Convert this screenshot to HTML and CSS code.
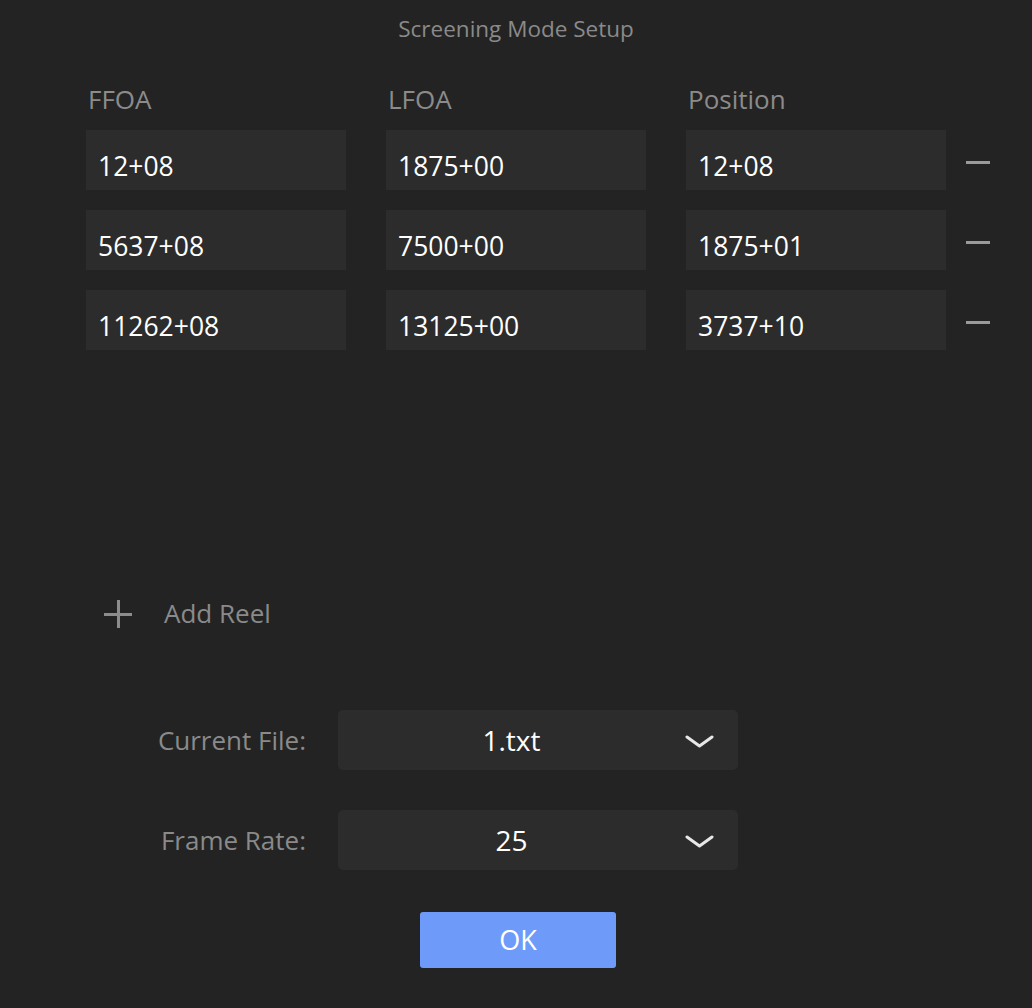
FILE: index.html
```html
<!DOCTYPE html>
<html lang="en">
<head>
<meta charset="utf-8">
<title>Screening Mode Setup</title>
<link rel="stylesheet" href="styles.css">
</head>
<body>
<div class="dialog">
  <div class="title">Screening Mode Setup</div>

  <div class="reels">
    <div class="row head">
      <div class="fields">
        <div class="col-head">FFOA</div>
        <div class="col-head">LFOA</div>
        <div class="col-head">Position</div>
      </div>
    </div>
    <div class="row">
      <div class="fields">
        <div class="field">12+08</div>
        <div class="field">1875+00</div>
        <div class="field">12+08</div>
      </div>
      <span class="remove"></span>
    </div>
    <div class="row">
      <div class="fields">
        <div class="field">5637+08</div>
        <div class="field">7500+00</div>
        <div class="field">1875+01</div>
      </div>
      <span class="remove"></span>
    </div>
    <div class="row">
      <div class="fields">
        <div class="field">11262+08</div>
        <div class="field">13125+00</div>
        <div class="field">3737+10</div>
      </div>
      <span class="remove"></span>
    </div>
  </div>

  <div class="add-reel">
    <span class="plus"></span>
    <span class="add-label">Add Reel</span>
  </div>

  <div class="form">
    <div class="form-row">
      <div class="form-label">Current File:</div>
      <div class="select">
        <span class="select-value">1.txt</span>
        <svg class="chevron" width="29" height="13" viewBox="0 0 29 13"><path d="M2 2 L14.5 11 L27 2" fill="none" stroke="#e8e8e8" stroke-width="3" stroke-linecap="round" stroke-linejoin="round"/></svg>
      </div>
    </div>
    <div class="form-row">
      <div class="form-label">Frame Rate:</div>
      <div class="select">
        <span class="select-value">25</span>
        <svg class="chevron" width="29" height="13" viewBox="0 0 29 13"><path d="M2 2 L14.5 11 L27 2" fill="none" stroke="#e8e8e8" stroke-width="3" stroke-linecap="round" stroke-linejoin="round"/></svg>
      </div>
    </div>
  </div>

  <div class="actions">
    <button class="ok">OK</button>
  </div>
</div>
</body>
</html>
```

FILE: styles.css
```css
html, body {
  margin: 0;
  padding: 0;
  background: #232323;
}

body {
  font-family: "Open Sans", "Noto Sans", sans-serif;
  font-weight: 500;
  color: #8a8a8a;
}

.dialog {
  width: 1032px;
  height: 1008px;
  box-sizing: border-box;
  padding-top: 14px;
}

.title {
  text-align: center;
  font-size: 22.5px;
  line-height: 30px;
  color: #8a8a8a;
}

.reels {
  margin-top: 37px;
  padding-left: 86px;
  display: flex;
  flex-direction: column;
  gap: 20px;
}

.row {
  display: flex;
  align-items: center;
  gap: 20px;
}

.row.head {
  margin-bottom: -7px;
}

.fields {
  display: flex;
  gap: 40px;
}

.col-head {
  width: 260px;
  box-sizing: border-box;
  padding-left: 2px;
  font-size: 26px;
  line-height: 36px;
  color: #8b8b8b;
}

.field {
  width: 260px;
  height: 60px;
  box-sizing: border-box;
  padding: 11px 12px 0;
  background: #2c2c2c;
  color: #ffffff;
  font-size: 26.5px;
  line-height: 50px;
  white-space: nowrap;
}

.remove {
  width: 24px;
  height: 3px;
  margin-top: 4px;
  background: #9a9a9a;
}

.add-reel {
  margin-top: 245px;
  padding-left: 104px;
  display: flex;
  align-items: center;
  height: 36px;
  gap: 32px;
}

.plus {
  position: relative;
  width: 28px;
  height: 28px;
  margin-top: 2px;
}

.plus::before,
.plus::after {
  content: "";
  position: absolute;
  background: #8c8c8c;
}

.plus::before {
  left: 0;
  top: 12.5px;
  width: 28px;
  height: 3px;
}

.plus::after {
  top: 0;
  left: 12.5px;
  width: 3px;
  height: 28px;
}

.add-label {
  font-size: 26px;
  line-height: 36px;
  color: #8a8a8a;
}

.form {
  margin-top: 79px;
  padding-left: 86px;
  display: flex;
  flex-direction: column;
  gap: 40px;
}

.form-row {
  display: flex;
  align-items: center;
  gap: 32px;
}

.form-label {
  width: 220px;
  text-align: right;
  font-size: 26px;
  line-height: 36px;
  color: #8a8a8a;
}

.select {
  width: 400px;
  height: 60px;
  background: #2c2c2c;
  border-radius: 5px;
  display: flex;
  align-items: center;
}

.select-value {
  flex: 1;
  text-align: center;
  color: #ffffff;
  font-size: 28px;
  line-height: 60px;
}

.chevron {
  margin-right: 24px;
  margin-top: 2px;
  display: block;
}

.actions {
  margin-top: 42px;
  display: flex;
  justify-content: center;
  padding-left: 4px;
}

.ok {
  width: 196px;
  height: 56px;
  border: none;
  border-radius: 3px;
  background: #6e9bf9;
  color: #ffffff;
  font-family: "Open Sans", "Noto Sans", sans-serif;
  font-weight: 500;
  font-size: 27px;
  line-height: 56px;
  padding: 0;
}
```
